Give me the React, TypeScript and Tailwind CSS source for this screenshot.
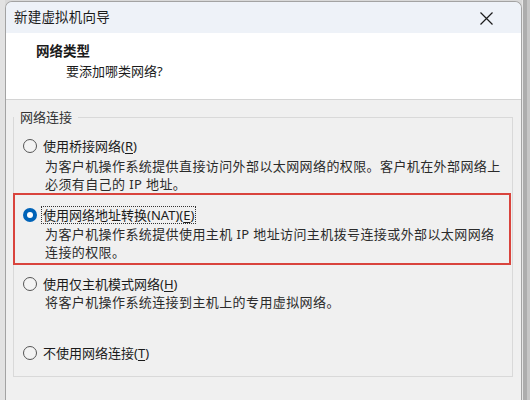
import type { ReactNode } from "react";

type Option = {
  label: ReactNode;
  lines: string[];
  checked?: boolean;
};

function Radio({ checked = false }: { checked?: boolean }) {
  if (checked) {
    return (
      <span className="flex h-[14px] w-[14px] shrink-0 items-center justify-center rounded-full bg-[#0063b8]">
        <span className="h-[6px] w-[6px] rounded-full bg-white" />
      </span>
    );
  }

  return <span className="h-[14px] w-[14px] shrink-0 rounded-full border border-[#555555] bg-[#f3f3f3]" />;
}

function Hotkey({ children }: { children: string }) {
  return <span className="underline underline-offset-[2px]">{children}</span>;
}

function Description({ lines }: { lines: string[] }) {
  return (
    <div className="pl-[31px] text-[13px] leading-[17.5px] tracking-[0.4px] text-[#2b2b2b]">
      {lines.map((line) => (
        <div key={line} className="whitespace-nowrap">
          {line}
        </div>
      ))}
    </div>
  );
}

const bridged: Option = {
  label: (
    <>
      使用桥接网络(<Hotkey>R</Hotkey>)
    </>
  ),
  lines: [
    "为客户机操作系统提供直接访问外部以太网网络的权限。客户机在外部网络上",
    "必须有自己的 IP 地址。",
  ],
};

const hostOnly: Option = {
  label: (
    <>
      使用仅主机模式网络(<Hotkey>H</Hotkey>)
    </>
  ),
  lines: ["将客户机操作系统连接到主机上的专用虚拟网络。"],
};

export default function App() {
  return (
    <div className="flex h-[400px] w-[530px] overflow-hidden bg-[#d9d9d9] font-['Segoe_UI','Noto_Sans','Noto_Sans_CJK_SC',sans-serif] text-[#1b1b1b]">
      <div className="w-[5px] shrink-0 bg-[#e2e2e2]" />

      <div className="mt-px flex w-[517px] shrink-0 flex-col overflow-hidden rounded-t-[7px] border-x border-t border-[#a3a3a3] bg-[#f0f0f0]">
        {/* title bar */}
        <div className="flex h-[31px] shrink-0 items-center justify-between bg-[#eef2f8] pl-[8px] pr-[28px]">
          <span className="text-[13.5px] tracking-[0.2px]">新建虚拟机向导</span>
          <svg width="13" height="13" viewBox="0 0 13 13" className="mt-[1px]">
            <path d="M0.5 0.5 L12.5 12.5 M12.5 0.5 L0.5 12.5" stroke="#1b1b1b" strokeWidth="1.2" fill="none" />
          </svg>
        </div>

        {/* header */}
        <div className="h-[67px] shrink-0 border-b border-[#d4d4d4] bg-white pt-[9px]">
          <div className="pl-[30px] text-[13.5px] font-bold leading-[18px]">网络类型</div>
          <div className="mt-[2px] pl-[60px] text-[13px] leading-[18px]">要添加哪类网络?</div>
        </div>

        {/* body */}
        <div className="flex-1 pl-[7px] pr-[8px] pt-[8px]">
          <fieldset className="h-[269px] border border-[#d9d9d9] p-0">
            <legend className="ml-0 px-[6px] text-[13px] leading-[18px] text-[#333333]">网络连接</legend>

            <div className="mt-[11px]">
              <div className="flex h-[18px] items-center gap-[6px] pl-[9px]">
                <Radio />
                <span className="text-[13px] leading-[18px]">{bridged.label}</span>
              </div>
              <div className="mt-[3px]">
                <Description lines={bridged.lines} />
              </div>
            </div>

            <div className="-ml-px mr-px border-2 border-[#d9443d] pb-[2px] pt-[11px]">
              <div className="flex h-[18px] items-center gap-[4px] pl-[8px]">
                <Radio checked />
                <span className="border border-dotted border-[#333333] px-[1px] text-[13px] leading-[16px]">
                  使用网络地址转换(NAT)(<Hotkey>E</Hotkey>)
                </span>
              </div>
              <div className="-ml-px mt-[2px]">
                <Description
                  lines={[
                    "为客户机操作系统提供使用主机 IP 地址访问主机拨号连接或外部以太网网络",
                    "连接的权限。",
                  ]}
                />
              </div>
            </div>

            <div className="mt-[10px]">
              <div className="flex h-[18px] items-center gap-[6px] pl-[9px]">
                <Radio />
                <span className="text-[13px] leading-[18px]">{hostOnly.label}</span>
              </div>
              <div className="mt-[1px]">
                <Description lines={hostOnly.lines} />
              </div>
            </div>

            <div className="mt-[32px] flex h-[18px] items-center gap-[6px] pl-[9px]">
              <Radio />
              <span className="text-[13px] leading-[18px]">
                不使用网络连接(<Hotkey>T</Hotkey>)
              </span>
            </div>
          </fieldset>
        </div>
      </div>

      <div className="flex flex-1">
        <div className="w-[1px] bg-[#e6e6e6]" />
        <div className="w-[4px] bg-[#adadad]" />
        <div className="flex-1 bg-[#c6c6c6]" />
      </div>
    </div>
  );
}
